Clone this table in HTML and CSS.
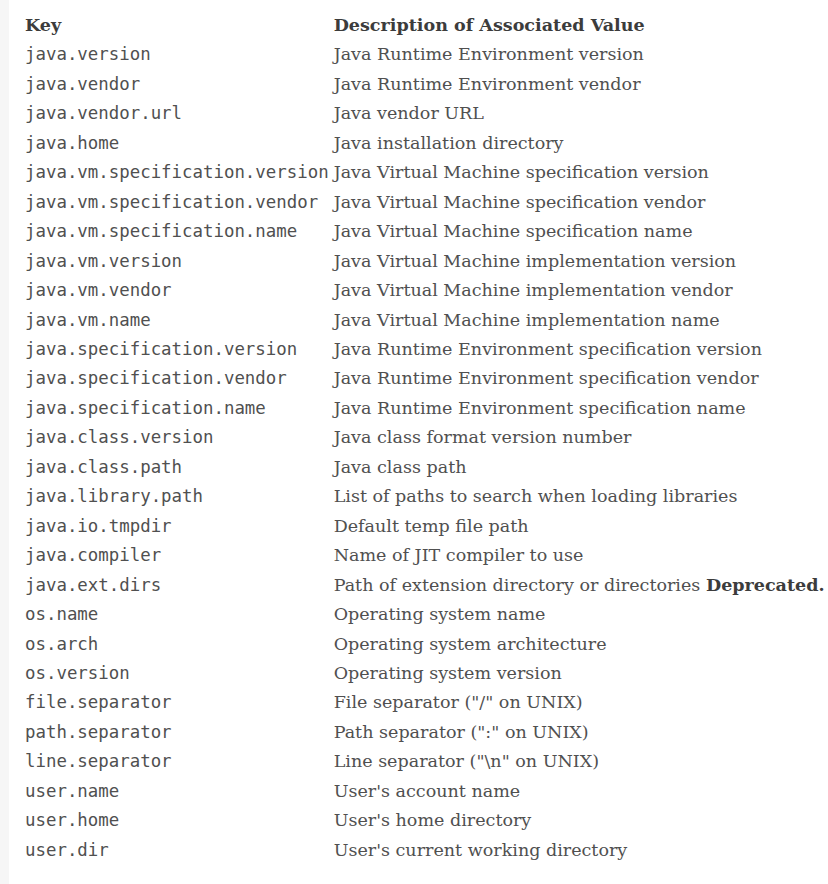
FILE: index.html
```html
<!DOCTYPE html>
<html>
<head>
<meta charset="utf-8">
<link rel="stylesheet" href="styles.css">
</head>
<body>
<div class="page">
<table class="props">
<thead>
<tr><th>Key</th><th>Description of Associated Value</th></tr>
</thead>
<tbody>
<tr><td><code>java.version</code></td><td>Java Runtime Environment version</td></tr>
<tr><td><code>java.vendor</code></td><td>Java Runtime Environment vendor</td></tr>
<tr><td><code>java.vendor.url</code></td><td>Java vendor URL</td></tr>
<tr><td><code>java.home</code></td><td>Java installation directory</td></tr>
<tr><td><code>java.vm.specification.version</code></td><td>Java Virtual Machine specification version</td></tr>
<tr><td><code>java.vm.specification.vendor</code></td><td>Java Virtual Machine specification vendor</td></tr>
<tr><td><code>java.vm.specification.name</code></td><td>Java Virtual Machine specification name</td></tr>
<tr><td><code>java.vm.version</code></td><td>Java Virtual Machine implementation version</td></tr>
<tr><td><code>java.vm.vendor</code></td><td>Java Virtual Machine implementation vendor</td></tr>
<tr><td><code>java.vm.name</code></td><td>Java Virtual Machine implementation name</td></tr>
<tr><td><code>java.specification.version</code></td><td>Java Runtime Environment specification version</td></tr>
<tr><td><code>java.specification.vendor</code></td><td>Java Runtime Environment specification vendor</td></tr>
<tr><td><code>java.specification.name</code></td><td>Java Runtime Environment specification name</td></tr>
<tr><td><code>java.class.version</code></td><td>Java class format version number</td></tr>
<tr><td><code>java.class.path</code></td><td>Java class path</td></tr>
<tr><td><code>java.library.path</code></td><td>List of paths to search when loading libraries</td></tr>
<tr><td><code>java.io.tmpdir</code></td><td>Default temp file path</td></tr>
<tr><td><code>java.compiler</code></td><td>Name of JIT compiler to use</td></tr>
<tr><td><code>java.ext.dirs</code></td><td>Path of extension directory or directories <b>Deprecated.</b></td></tr>
<tr><td><code>os.name</code></td><td>Operating system name</td></tr>
<tr><td><code>os.arch</code></td><td>Operating system architecture</td></tr>
<tr><td><code>os.version</code></td><td>Operating system version</td></tr>
<tr><td><code>file.separator</code></td><td>File separator ("/" on UNIX)</td></tr>
<tr><td><code>path.separator</code></td><td>Path separator (":" on UNIX)</td></tr>
<tr><td><code>line.separator</code></td><td>Line separator ("\n" on UNIX)</td></tr>
<tr><td><code>user.name</code></td><td>User's account name</td></tr>
<tr><td><code>user.home</code></td><td>User's home directory</td></tr>
<tr><td><code>user.dir</code></td><td>User's current working directory</td></tr>
</tbody>
</table>
</div>
</body>
</html>
```
FILE: styles.css
```css
html, body {
  margin: 0;
  padding: 0;
  background: #ffffff;
}
.page {
  border-left: 9px solid #f6f6f6;
  min-height: 884px;
  box-sizing: border-box;
  padding: 11px 0 0 16px;
}
.props {
  border-collapse: collapse;
  border-spacing: 0;
  font-family: "DejaVu Serif", serif;
  font-size: 17.55px;
  color: #505050;
}
.props th {
  text-align: left;
  font-weight: bold;
  color: #3c3c3c;
  padding: 0 5px 0 0;
  height: 29.46px;
  line-height: 29.46px;
}
.props td {
  padding: 0 5px 0 0;
  height: 29.46px;
  line-height: 29.46px;
  vertical-align: middle;
  white-space: nowrap;
}
.props code {
  font-family: "DejaVu Sans Mono", monospace;
  font-size: 17.4px;
  color: #505050;
}
.props b {
  color: #3c3c3c;
}
```
